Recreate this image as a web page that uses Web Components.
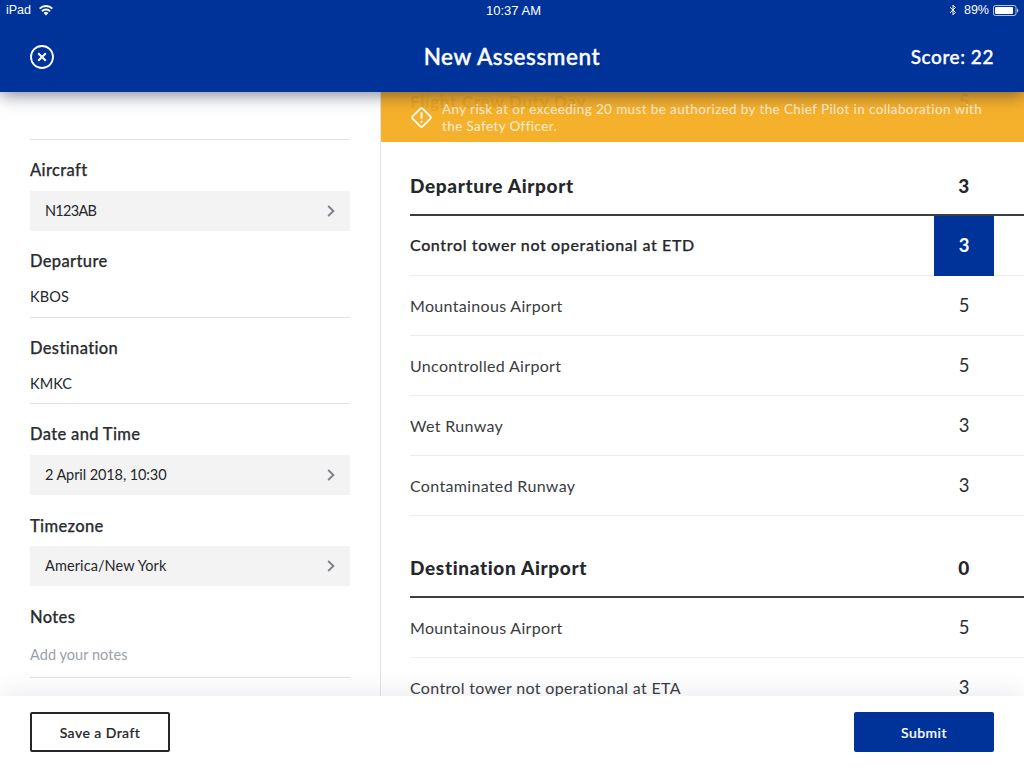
<!DOCTYPE html>
<html><head><meta charset="utf-8"><style>
html,body{margin:0;padding:0;background:#fff}
body{font-family:Lato,"Liberation Sans",sans-serif;color:#25272b}
</style></head><body>
<app-shell></app-shell>
<script>
const def=(name,css,html,extra)=>{customElements.define(name,class extends HTMLElement{
  constructor(){super();const r=this.attachShadow({mode:'open'});
    r.innerHTML='<style>'+css+'</style>'+(typeof html==='function'?html(this):html);}
  connectedCallback(){if(extra)extra(this)}
})};
def('status-bar',`:host{display:grid;grid-template-columns:1fr auto 1fr;align-items:center;height:20px;padding:0 5px 0 6px;color:#fff;font:12.5px "Liberation Sans",sans-serif}
.l,.r{display:flex;align-items:center}.l{gap:8px}.r{justify-content:flex-end;gap:4px}.t{font-size:13px;padding-left:2px}`,
`<div class="l"><span>iPad</span><svg width="14" height="11" viewBox="0 0 14 11" fill="#fff"><path d="M7 10.6 4.7 8a3.2 3.2 0 0 1 4.6 0zM3.6 6.9 2.3 5.4a6.7 6.7 0 0 1 9.4 0l-1.3 1.5a4.8 4.8 0 0 0-6.8 0zM1.3 4.3 0 2.9a10 10 0 0 1 14 0l-1.3 1.4a8.1 8.1 0 0 0-11.4 0z"/></svg></div>
<div class="t">10:37 AM</div>
<div class="r"><svg width="8" height="12" viewBox="0 0 8 12" fill="none" stroke="#fff" stroke-width="1"><path d="M1 3.2 6.4 8.4 4 10.8V1.2L6.4 3.6 1 8.8"/></svg><span style="margin-left:3px">89%</span><svg width="26" height="11" viewBox="0 0 26 11"><rect x=".5" y=".5" width="22.5" height="10" rx="2" fill="none" stroke="#fff" stroke-opacity=".7"/><rect x="2" y="2" width="18" height="7" rx="1" fill="#fff"/><path d="M24 3.5c1 .3 1.4 1 1.4 2s-.4 1.7-1.4 2z" fill="#fff" fill-opacity=".7"/></svg></div>`);
def('app-header',`:host{display:block;position:relative;z-index:3;background:#00339a;color:#fff;box-shadow:0 3px 16px rgba(10,15,50,.5)}
.b{display:grid;grid-template-columns:1fr auto 1fr;align-items:center;height:72px;padding:0 30px;box-sizing:border-box}
h1{margin:0;font-size:22.5px;font-weight:500;letter-spacing:.6px;-webkit-text-stroke:.4px #fff}
.s{justify-self:end;font-size:19px;font-weight:500;letter-spacing:.55px;-webkit-text-stroke:.35px #fff}
svg{display:block;position:relative;top:1px}`,
`<status-bar></status-bar><div class="b"><svg width="24" height="24" viewBox="0 0 24 24" fill="none" stroke="#fff"><circle cx="12" cy="12" r="11" stroke-width="1.8"/><path d="M8.2 8.2l7.6 7.6M15.8 8.2l-7.6 7.6" stroke-width="2"/></svg><h1>New Assessment</h1><div class="s">Score: 22</div></div>`);
def('select-row',`:host{display:flex;align-items:center;justify-content:space-between;height:40px;background:#f3f3f4;padding:0 15px 2px;box-sizing:border-box;border-radius:1px;font-size:14.5px;letter-spacing:.1px}
svg{display:block;position:relative;top:1px}`,
`<slot></slot><svg width="8" height="12" viewBox="0 0 8 12" fill="none" stroke="#7d838b" stroke-width="1.9"><path d="M1.2 1 6.4 6 1.2 11"/></svg>`);
def('form-field',`:host{display:block;padding-top:var(--top,20px)}
.l{font-size:16.5px;font-weight:500;line-height:20px;letter-spacing:.35px;color:#2a2c30;-webkit-text-stroke:.25px #2a2c30}
:host([select]) ::slotted(select-row){margin-top:var(--gap,11px)}
.v{display:block}
:host(:not([select])) .v{margin-top:16px;padding-bottom:var(--pb,10px);border-bottom:1px solid #dfe1e4;font-size:14.5px;line-height:20px;letter-spacing:.1px}
:host([placeholder]) .v{color:#9aa0a8;margin-top:18px;letter-spacing:.05px}`,
h=>`<div class="l">${h.getAttribute('label')}</div><div class="v"><slot></slot></div>`);
def('side-form',`:host{display:block;width:381px;box-sizing:border-box;height:100%;overflow:hidden;border-right:1px solid #e3e4e6;padding:0 30px}
.ghost{margin-top:-18px;border-bottom:1px solid #dfe1e4;box-sizing:border-box;font-size:14.5px;line-height:19px;padding-left:48px;height:66px;letter-spacing:.2px;color:#6d7076}`,
`<div class="ghost">Charter approved by pilot</div><slot></slot>`);
def('risk-row',`:host{display:grid;grid-template-columns:1fr 60px;align-items:stretch;height:60px;padding-right:30px;border-bottom:1px solid #eceded;box-sizing:border-box;font-size:16px;letter-spacing:.33px;color:#3a3c40}
.t{align-self:center;padding-bottom:1px}.s{display:flex;align-items:center;justify-content:center;font-size:18.5px;margin-bottom:-1px;padding-bottom:2px;box-sizing:border-box;letter-spacing:0;color:#2b2d31}
:host([selected]){font-weight:500;color:#25272b;letter-spacing:.63px}
:host([selected]) .t{padding-bottom:3px;-webkit-text-stroke:.25px #25272b}
:host([selected]) .s{background:#00339a;color:#fff;font-weight:700}
:host([ghost]){font-weight:700;font-size:17px;letter-spacing:.7px;color:#25272b}
:host([ghost]) .t{padding-bottom:5px}:host([ghost]) .s{padding-bottom:6px}`,
h=>`<div class="t"><slot></slot></div><div class="s">${h.getAttribute('score')}</div>`);
def('risk-section',`:host{display:block}
.h{display:grid;grid-template-columns:1fr 60px;align-items:center;height:82px;box-sizing:border-box;padding:22px 30px 0 0;border-bottom:2px solid #3b3d42;font-size:19px;font-weight:900;letter-spacing:.65px;color:#25272b}
.s{text-align:center}`,
h=>`<div class="h"><div>${h.getAttribute('title')}</div><div class="s">${h.getAttribute('score')}</div></div><slot></slot>`);
def('risk-list',`:host{display:block;flex:1;height:100%;overflow:hidden;padding-left:29px;box-sizing:border-box}
.w{margin-top:-18px}`,`<div class="w"><slot></slot></div>`);
def('warn-banner',`:host{position:absolute;left:381px;right:0;top:0;height:50px;box-sizing:border-box;background:rgba(245,173,33,.95);display:flex;align-items:center;gap:9px;padding:0 30px 0 29px;color:rgba(255,255,255,.8);font-size:13.5px;line-height:17px;letter-spacing:.38px;z-index:2}
svg{flex:none}.x{padding-top:2px}`,
`<svg width="23" height="23" viewBox="0 0 23 23" fill="none" stroke="#fff" stroke-width="1.7"><rect x="4.4" y="4.4" width="14.2" height="14.2" rx="2" transform="rotate(45 11.5 11.5)"/><path d="M11.5 6.5v6.3" stroke-width="2"/><circle cx="11.5" cy="15.8" r="1.1" fill="#fff" stroke="none"/></svg><div class="x"><slot></slot></div>`);
def('app-button',`:host{display:flex;align-items:center;justify-content:center;width:140px;height:40px;box-sizing:border-box;border:2px solid #25272b;border-radius:2px;font-size:14px;font-weight:500;letter-spacing:.45px;color:#25272b;background:#fff;-webkit-text-stroke:.2px #25272b}
:host([primary]){background:#00339a;border-color:#00339a;color:#fff;-webkit-text-stroke:.2px #fff}`,`<slot></slot>`);
def('app-footer',`:host{display:flex;justify-content:space-between;align-items:center;height:72px;padding:0 30px;box-sizing:border-box;background:#fff;position:relative;z-index:2;box-shadow:0 -6px 22px rgba(60,70,100,.09)}`,`<slot></slot>`);
def('app-shell',`:host{display:flex;flex-direction:column;width:1024px;height:768px;overflow:hidden}
.m{flex:1;min-height:0;display:flex;position:relative}`,
`<app-header></app-header><div class="m">
<side-form>
<form-field select label="Aircraft"><select-row style="letter-spacing:-.7px">N123AB</select-row></form-field>
<form-field label="Departure">KBOS</form-field>
<form-field label="Destination" style="--pb:9px">KMKC</form-field>
<form-field select label="Date and Time"><select-row style="letter-spacing:-.1px">2 April 2018, 10:30</select-row></form-field>
<form-field select label="Timezone" style="--top:21px;--gap:10px"><select-row>America/New York</select-row></form-field>
<form-field placeholder label="Notes" style="--top:21px;--pb:12px">Add your notes</form-field>
</side-form>
<risk-list>
<risk-row ghost score="5">Flight Crew Duty Day</risk-row>
<risk-section title="Departure Airport" score="3">
<risk-row selected score="3">Control tower not operational at ETD</risk-row>
<risk-row score="5">Mountainous Airport</risk-row>
<risk-row score="5">Uncontrolled Airport</risk-row>
<risk-row score="3">Wet Runway</risk-row>
<risk-row score="3">Contaminated Runway</risk-row>
</risk-section>
<risk-section title="Destination Airport" score="0">
<risk-row score="5">Mountainous Airport</risk-row>
<risk-row score="3">Control tower not operational at ETA</risk-row>
</risk-section>
</risk-list>
<warn-banner>Any risk at or exceeding 20 must be authorized by the Chief Pilot in collaboration with the Safety Officer.</warn-banner>
</div>
<app-footer><app-button>Save a Draft</app-button><app-button primary>Submit</app-button></app-footer>`);
</script>
</body></html>
